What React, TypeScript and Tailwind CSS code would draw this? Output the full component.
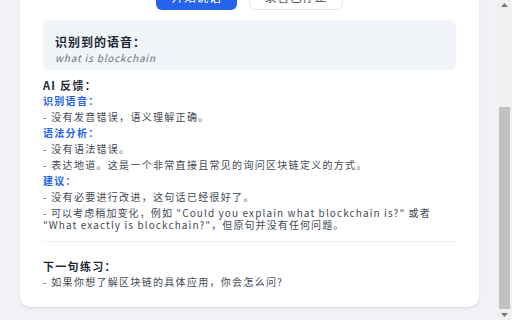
import React from "react";

function ScrollArrow({ down }: { down?: boolean }) {
  return (
    <div className="flex h-[10px] items-center justify-center">
      <svg width="7" height="4" viewBox="0 0 7 4">
        {down ? (
          <polygon points="0,0 7,0 3.5,4" fill="#7a7a7a" />
        ) : (
          <polygon points="0,4 7,4 3.5,0" fill="#7a7a7a" />
        )}
      </svg>
    </div>
  );
}

const body = "text-[10px] leading-4 tracking-[1.3px] text-[#434a54]";
const label = "text-[10px] leading-4 font-bold tracking-[1.3px] text-[#2563eb]";
const heading = "text-[11px] leading-4 font-bold tracking-[1.3px] text-[#1f2937]";

export default function App() {
  return (
    <div className="flex h-[320px] w-[512px] overflow-hidden bg-[#f0f2f5] font-['Noto_Sans_CJK_SC','Noto_Sans',sans-serif]">
      <div className="flex-1 overflow-hidden pl-[20px] pr-[18px]">
        <div className="-mt-[40px] rounded-[10px] bg-white px-[23px] pb-[17px] pt-[24px] shadow-sm">
          {/* controls */}
          <div className="flex justify-center gap-[12px]">
            <button className="flex h-[26px] w-[81px] items-center justify-center rounded-md bg-[#2563eb] text-[12px] tracking-[0.5px] text-white">
              开始说话
            </button>
            <button className="flex h-[26px] w-[94px] items-center justify-center rounded-md border border-[#e5e7eb] bg-white text-[12px] tracking-[0.5px] text-[#4b5563]">
              录音已停止
            </button>
          </div>

          {/* recognised speech */}
          <div className="mt-[10px] h-[50px] rounded-md bg-[#f1f4f9] px-[12px] pt-[15px]">
            <div className="text-[12px] leading-[14px] font-bold tracking-[1px] text-[#1f2937]">
              识别到的语音：
            </div>
            <div className="mt-[3px] text-[10px] leading-[12px] italic tracking-[0.8px] text-[#6b7280]">
              what is blockchain
            </div>
          </div>

          {/* feedback */}
          <div className="mt-[7px]">
            <div className={heading}>AI 反馈：</div>
            <div className={label}>识别语音：</div>
            <p className={body}>- 没有发音错误，语义理解正确。</p>
            <div className={label}>语法分析：</div>
            <p className={body}>- 没有语法错误。</p>
            <p className={body}>- 表达地道。这是一个非常直接且常见的询问区块链定义的方式。</p>
            <div className={label}>建议：</div>
            <p className={body}>- 没有必要进行改进，这句话已经很好了。</p>
            <p className="mt-[2px] text-[10px] leading-[12px] tracking-[1.1px] text-[#434a54]">
              - 可以考虑稍加变化，例如 "Could you explain what blockchain is?" 或者
              <br />
              "What exactly is blockchain?"，但原句并没有任何问题。
            </p>
          </div>

          <div className="mt-[10px] border-t border-[#f1f2f4]" />

          {/* next */}
          <div className="mt-[16px]">
            <div className={heading}>下一句练习：</div>
            <p className={body}>- 如果你想了解区块链的具体应用，你会怎么问?</p>
          </div>
        </div>
      </div>

      {/* scrollbar */}
      <div className="flex w-[15px] flex-col bg-[#f1f1f1]">
        <ScrollArrow />
        <div className="mx-[2px] mt-[97px] h-[202px] bg-[#c1c1c1]" />
        <div className="flex-1" />
        <ScrollArrow down />
      </div>
    </div>
  );
}
